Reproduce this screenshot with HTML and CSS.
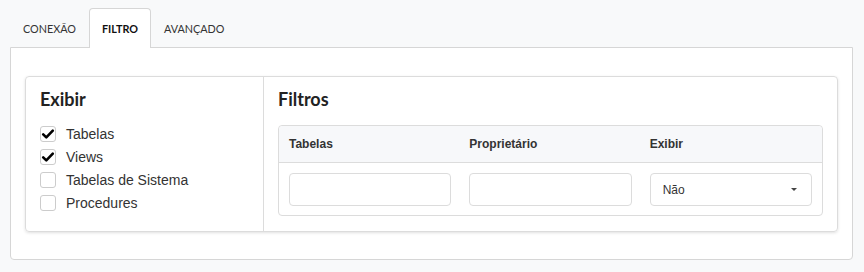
FILE: index.html
```html
<!DOCTYPE html>
<html lang="pt">
<head>
    <meta charset="UTF-8">
    <meta name="viewport" content="width=device-width, initial-scale=1.0">
    <title>Filtro</title>
    <link rel="stylesheet" href="styles.css">
</head>
<body>

<div class="tabs">
    <div class="tab">CONEXÃO</div>
    <div class="tab active">FILTRO</div>
    <div class="tab">AVANÇADO</div>
</div>

<div class="panel">
    <div class="card">
        <div class="col-left">
            <h2>Exibir</h2>
            <label class="check"><span class="box checked"><svg viewBox="0 0 16 16" width="16" height="16"><path d="M3.2 8.4 L6.3 11.4 L12.8 4.6" fill="none" stroke="#000" stroke-width="2.6" stroke-linecap="round" stroke-linejoin="round"/></svg></span>Tabelas</label>
            <label class="check"><span class="box checked"><svg viewBox="0 0 16 16" width="16" height="16"><path d="M3.2 8.4 L6.3 11.4 L12.8 4.6" fill="none" stroke="#000" stroke-width="2.6" stroke-linecap="round" stroke-linejoin="round"/></svg></span>Views</label>
            <label class="check"><span class="box"></span>Tabelas de Sistema</label>
            <label class="check"><span class="box"></span>Procedures</label>
        </div>
        <div class="col-right">
            <h2>Filtros</h2>
            <div class="table">
                <div class="table-head">
                    <div>Tabelas</div>
                    <div>Proprietário</div>
                    <div>Exibir</div>
                </div>
                <div class="table-row">
                    <div class="input"></div>
                    <div class="input"></div>
                    <div class="input select">Não<span class="caret"></span></div>
                </div>
            </div>
        </div>
    </div>
</div>

</body>
</html>
```

FILE: styles.css
```css
body {
    margin: 0;
    padding: 8px 11px 0 10px;
    background-color: #f8f9fa;
    font-family: 'Liberation Sans', Arial, sans-serif;
    color: #333;
}
.tabs {
    display: flex;
    height: 39px;
}
.tab {
    font-family: 'Lato', sans-serif;
    font-size: 10.8px;
    color: #333;
    padding: 0 12px;
    line-height: 39px;
    border: 1px solid transparent;
    border-bottom: none;
    border-radius: 4px 4px 0 0;
    height: 39px;
    box-sizing: border-box;
}
.tab.active {
    background-color: #fff;
    border-color: #d6d6d6;
    font-weight: bold;
    color: #111;
    height: 40px;
    margin-bottom: -1px;
    position: relative;
    z-index: 1;
}
.panel {
    background-color: #fff;
    border: 1px solid #d6d6d6;
    border-radius: 0 0 4px 4px;
    padding: 28px 14px 27px 14px;
}
.card {
    display: flex;
    border: 1px solid #dcdcdc;
    border-radius: 4px;
    box-shadow: 0 1px 3px rgba(0, 0, 0, 0.12);
    height: 154px;
}
.card h2 {
    font-family: 'Lato', sans-serif;
    font-size: 18px;
    font-weight: bold;
    color: #222;
    margin: 0;
    line-height: 22px;
}
.col-left {
    width: 223px;
    padding: 11px 0 0 14px;
    border-right: 1px solid #dcdcdc;
}
.col-left h2 {
    margin-bottom: 12px;
}
.check {
    display: flex;
    align-items: center;
    font-size: 14px;
    height: 23px;
    color: #333;
}
.box {
    width: 14px;
    height: 14px;
    border: 1px solid #ccc;
    border-radius: 3px;
    margin-right: 10px;
    display: flex;
    align-items: center;
    justify-content: center;
}
.box svg {
    flex: none;
}
.col-right {
    flex: 1;
    padding: 11px 14px 0 14px;
}
.col-right h2 {
    margin-bottom: 15px;
}
.table {
    border: 1px solid #dcdcdc;
    border-radius: 4px;
}
.table-head, .table-row {
    display: grid;
    grid-template-columns: 1fr 1fr 1fr;
    column-gap: 18px;
    padding: 0 10px;
}
.table-head {
    background-color: #f7f8fa;
    border-bottom: 1px solid #dcdcdc;
    border-radius: 4px 4px 0 0;
    height: 36px;
    align-items: center;
    font-size: 12px;
    font-weight: bold;
    color: #333;
}
.table-row {
    padding-top: 10px;
    padding-bottom: 9px;
}
.input {
    height: 31px;
    border: 1px solid #dcdcdc;
    border-radius: 4px;
    box-sizing: content-box;
}
.select {
    display: flex;
    align-items: center;
    justify-content: space-between;
    font-size: 12px;
    color: #333;
    padding: 0 14px 0 12px;
}
.caret {
    width: 0;
    height: 0;
    border-left: 3px solid transparent;
    border-right: 3px solid transparent;
    border-top: 3px solid #444;
}
```
